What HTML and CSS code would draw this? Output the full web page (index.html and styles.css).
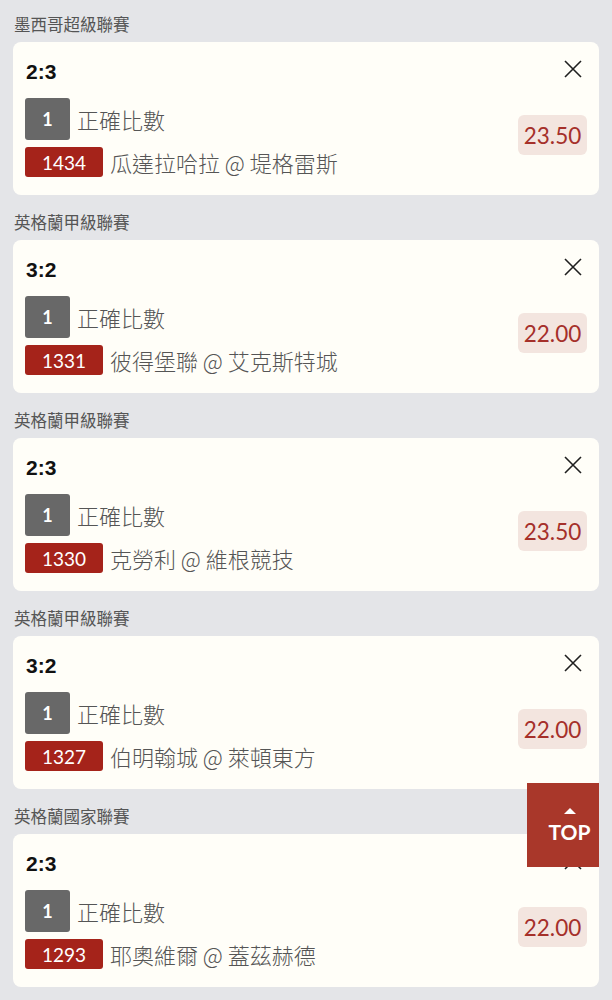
FILE: index.html
```html
<!DOCTYPE html>
<html lang="zh-Hant">
<head>
    <meta charset="UTF-8">
    <meta name="viewport" content="width=device-width, initial-scale=1.0">
    <title>投注單</title>
    <link rel="stylesheet" href="styles.css">
</head>
<body>
    <div class="slip">
        <section class="group">
            <div class="league">墨西哥超級聯賽</div>
            <div class="card">
                <div class="card-top">
                    <span class="score">2:3</span>
                    <button class="close" aria-label="close">
                        <svg viewBox="0 0 20 20" width="20" height="20"><path d="M2 2L18 18M18 2L2 18" stroke="#1f1f1f" stroke-width="1.6" fill="none"/></svg>
                    </button>
                </div>
                <div class="card-body">
                    <div class="info">
                        <div class="row"><span class="tag grey">1</span><span class="text">正確比數</span></div>
                        <div class="row"><span class="tag red">1434</span><span class="text">瓜達拉哈拉 @ 堤格雷斯</span></div>
                    </div>
                    <div class="odds">23.50</div>
                </div>
            </div>
        </section>

        <section class="group">
            <div class="league">英格蘭甲級聯賽</div>
            <div class="card">
                <div class="card-top">
                    <span class="score">3:2</span>
                    <button class="close" aria-label="close">
                        <svg viewBox="0 0 20 20" width="20" height="20"><path d="M2 2L18 18M18 2L2 18" stroke="#1f1f1f" stroke-width="1.6" fill="none"/></svg>
                    </button>
                </div>
                <div class="card-body">
                    <div class="info">
                        <div class="row"><span class="tag grey">1</span><span class="text">正確比數</span></div>
                        <div class="row"><span class="tag red">1331</span><span class="text">彼得堡聯 @ 艾克斯特城</span></div>
                    </div>
                    <div class="odds">22.00</div>
                </div>
            </div>
        </section>

        <section class="group">
            <div class="league">英格蘭甲級聯賽</div>
            <div class="card">
                <div class="card-top">
                    <span class="score">2:3</span>
                    <button class="close" aria-label="close">
                        <svg viewBox="0 0 20 20" width="20" height="20"><path d="M2 2L18 18M18 2L2 18" stroke="#1f1f1f" stroke-width="1.6" fill="none"/></svg>
                    </button>
                </div>
                <div class="card-body">
                    <div class="info">
                        <div class="row"><span class="tag grey">1</span><span class="text">正確比數</span></div>
                        <div class="row"><span class="tag red">1330</span><span class="text">克勞利 @ 維根競技</span></div>
                    </div>
                    <div class="odds">23.50</div>
                </div>
            </div>
        </section>

        <section class="group">
            <div class="league">英格蘭甲級聯賽</div>
            <div class="card">
                <div class="card-top">
                    <span class="score">3:2</span>
                    <button class="close" aria-label="close">
                        <svg viewBox="0 0 20 20" width="20" height="20"><path d="M2 2L18 18M18 2L2 18" stroke="#1f1f1f" stroke-width="1.6" fill="none"/></svg>
                    </button>
                </div>
                <div class="card-body">
                    <div class="info">
                        <div class="row"><span class="tag grey">1</span><span class="text">正確比數</span></div>
                        <div class="row"><span class="tag red">1327</span><span class="text">伯明翰城 @ 萊頓東方</span></div>
                    </div>
                    <div class="odds">22.00</div>
                </div>
            </div>
        </section>

        <section class="group">
            <div class="league">英格蘭國家聯賽</div>
            <div class="card">
                <div class="card-top">
                    <span class="score">2:3</span>
                    <button class="close" aria-label="close">
                        <svg viewBox="0 0 20 20" width="20" height="20"><path d="M2 2L18 18M18 2L2 18" stroke="#1f1f1f" stroke-width="1.6" fill="none"/></svg>
                    </button>
                </div>
                <div class="card-body">
                    <div class="info">
                        <div class="row"><span class="tag grey">1</span><span class="text">正確比數</span></div>
                        <div class="row"><span class="tag red">1293</span><span class="text">耶奧維爾 @ 蓋茲赫德</span></div>
                    </div>
                    <div class="odds">22.00</div>
                </div>
            </div>
        </section>
    </div>

    <a class="to-top" href="#">
        <span class="arrow"></span>
        <span class="to-top-label">TOP</span>
    </a>
</body>
</html>
```

FILE: styles.css
```css
body {
    margin: 0;
    background-color: #e4e5e8;
    font-family: 'Noto Sans CJK TC', 'Noto Sans', sans-serif;
    overflow: hidden;
}
.group {
    margin-bottom: 3px;
}
.league {
    padding: 12px 14px 6px;
    font-size: 16.5px;
    line-height: 24px;
    color: #555;
}
.card {
    margin: 0 13px;
    padding: 16px 12px 18px 12px;
    background-color: #fffef8;
    border-radius: 8px;
}
.card-top {
    display: flex;
    justify-content: space-between;
    align-items: flex-start;
    height: 28px;
}
.score {
    margin-left: 1px;
    font-family: 'Liberation Sans', Arial, sans-serif;
    font-weight: bold;
    font-size: 21px;
    line-height: 28px;
    color: #111;
}
.close {
    margin: 1px 4px 0 0;
    padding: 0;
    width: 20px;
    height: 20px;
    border: none;
    background: none;
    cursor: pointer;
}
.close svg {
    display: block;
}
.card-body {
    display: flex;
    justify-content: space-between;
    align-items: center;
    margin-top: 12px;
}
.info {
    display: flex;
    flex-direction: column;
    gap: 7px;
}
.row {
    display: flex;
    align-items: center;
}
.tag {
    display: flex;
    align-items: center;
    justify-content: center;
    font-family: 'Lato', sans-serif;
    color: #fff;
    border-radius: 3px;
}
.tag.grey {
    width: 45px;
    height: 42px;
    background-color: #686868;
    font-size: 18px;
    font-weight: bold;
}
.tag.red {
    width: 78px;
    height: 30px;
    background-color: #a5231a;
    font-size: 19px;
}
.text {
    margin-left: 7px;
    font-size: 22px;
    font-weight: 300;
    color: #555;
    line-height: 30px;
}
.odds {
    margin-bottom: 5px;
    width: 69px;
    height: 40px;
    display: flex;
    align-items: center;
    justify-content: center;
    background-color: #f3e5df;
    border-radius: 6px;
    font-family: 'Lato', sans-serif;
    font-size: 22.5px;
    color: #a5302a;
}
.to-top {
    position: fixed;
    left: 527px;
    top: 783px;
    width: 72px;
    height: 84px;
    padding-left: 13px;
    box-sizing: border-box;
    display: flex;
    flex-direction: column;
    align-items: center;
    justify-content: center;
    gap: 7px;
    background-color: #a9372a;
    text-decoration: none;
}
.arrow {
    width: 0;
    height: 0;
    border-left: 6px solid transparent;
    border-right: 6px solid transparent;
    border-bottom: 6px solid #fff;
}
.to-top-label {
    font-family: 'Lato', sans-serif;
    font-weight: bold;
    font-size: 21px;
    line-height: 21px;
    color: #fff;
}
```
